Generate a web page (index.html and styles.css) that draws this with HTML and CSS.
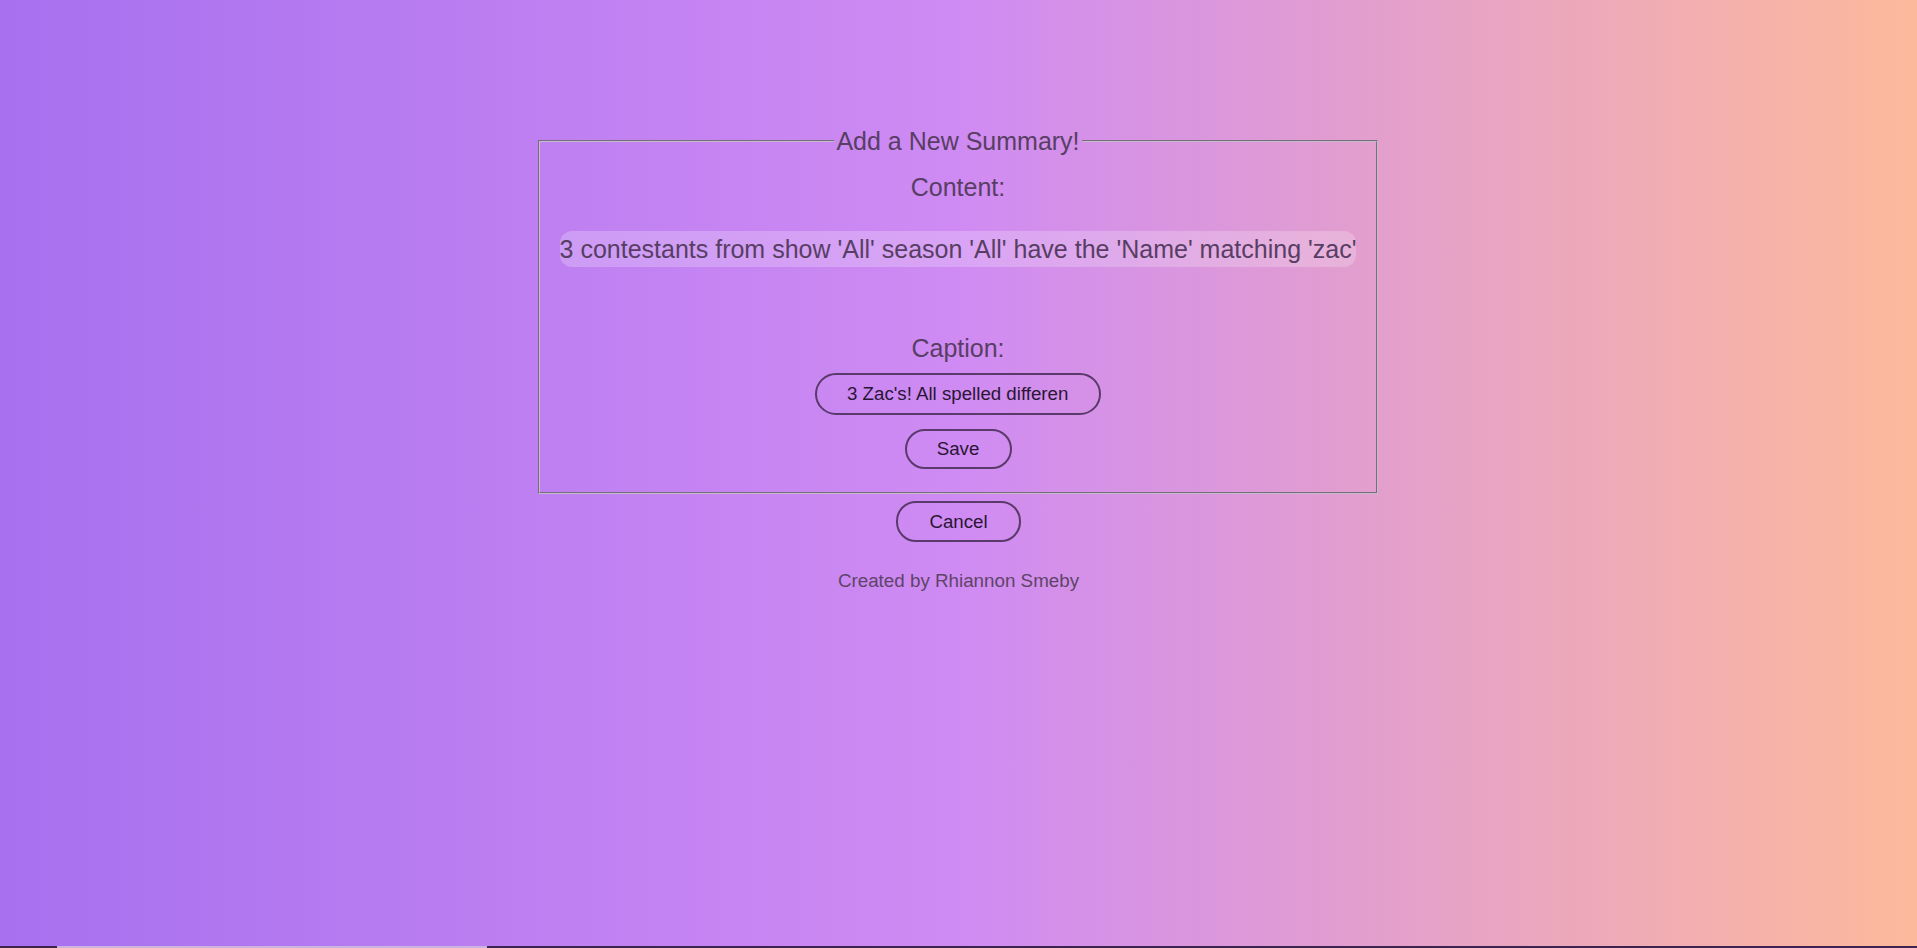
FILE: index.html
```html
<!DOCTYPE html>
<html lang="en">
<head>
<meta charset="utf-8">
<title>Add a New Summary</title>
<link rel="stylesheet" href="styles.css">
</head>
<body>
<main class="page">
  <form class="summary-form">
    <fieldset class="summary-fieldset">
      <legend class="summary-legend">Add a New Summary!</legend>
      <div class="fieldset-body">
        <h3 class="field-label">Content:</h3>
        <div class="content-text">3 contestants from show 'All' season 'All' have the 'Name' matching 'zac'</div>
        <h3 class="field-label caption-label">Caption:</h3>
        <input class="pill-input" type="text" value="3 Zac's! All spelled differently!">
        <button class="pill-btn save-btn" type="button">Save</button>
      </div>
    </fieldset>
  </form>
  <button class="pill-btn cancel-btn" type="button">Cancel</button>
  <p class="credit">Created by Rhiannon Smeby</p>
</main>
<div class="bottom-strip"><div class="bottom-thumb"></div></div>
</body>
</html>
```

FILE: styles.css
```css
html, body {
  margin: 0;
  padding: 0;
  height: 100%;
}

body {
  font-family: "Liberation Sans", Arial, sans-serif;
  background: linear-gradient(to right, #a770ef, #cf8bf3, #fdb99b);
  overflow: hidden;
}

.page {
  display: flex;
  flex-direction: column;
  align-items: center;
  padding-top: 126px;
  min-height: 100%;
  box-sizing: border-box;
}

.summary-form {
  display: flex;
  flex-direction: column;
  align-items: center;
  margin-right: 1px;
}

.summary-fieldset {
  box-sizing: border-box;
  width: 840px;
  margin: 0;
  padding: 0;
  border: 2px groove #c9b9cf;
  min-width: 0;
}

.summary-legend {
  margin: 0 auto;
  padding: 0 2px;
  font-size: 25px;
  line-height: 30px;
  color: #583e64;
}

.fieldset-body {
  display: flex;
  flex-direction: column;
  align-items: center;
  padding: 16px 0 23px;
}

.field-label {
  margin: 0;
  font-size: 25px;
  line-height: 30px;
  font-weight: normal;
  color: #583e64;
}

.content-text {
  margin-top: 29px;
  padding: 4px 0;
  font-size: 25px;
  line-height: 28px;
  color: #583e64;
  background: rgba(255, 255, 255, 0.22);
  border-radius: 12px;
  white-space: nowrap;
}

.caption-label {
  margin-top: 66px;
}

.pill-input {
  box-sizing: border-box;
  margin-top: 10px;
  width: 286px;
  height: 42px;
  padding: 0 31px 0 30px;
  border: 2px solid #5a3a6a;
  border-radius: 21px;
  background: transparent;
  font-family: "Liberation Sans", Arial, sans-serif;
  font-size: 18.7px;
  color: #2a1535;
  text-align: center;
  outline: none;
}

.pill-btn {
  box-sizing: border-box;
  height: 40px;
  padding: 0 30px;
  border: 2px solid #5a3a6a;
  border-radius: 20px;
  background: transparent;
  font-family: "Liberation Sans", Arial, sans-serif;
  font-size: 18.7px;
  color: #2a1535;
  cursor: pointer;
}

.save-btn {
  margin-top: 14px;
  width: 107px;
}

.cancel-btn {
  margin-top: 7px;
  width: 125px;
  height: 41px;
}

.credit {
  margin: 28px 0 0;
  font-size: 18.8px;
  line-height: 22px;
  color: #5e4468;
}

.bottom-strip {
  position: fixed;
  left: 0;
  right: 0;
  bottom: 0;
  height: 2px;
  background: #3d2450;
}

.bottom-thumb {
  margin-left: 57px;
  width: 430px;
  height: 2px;
  background: #cdb3e0;
}
```
